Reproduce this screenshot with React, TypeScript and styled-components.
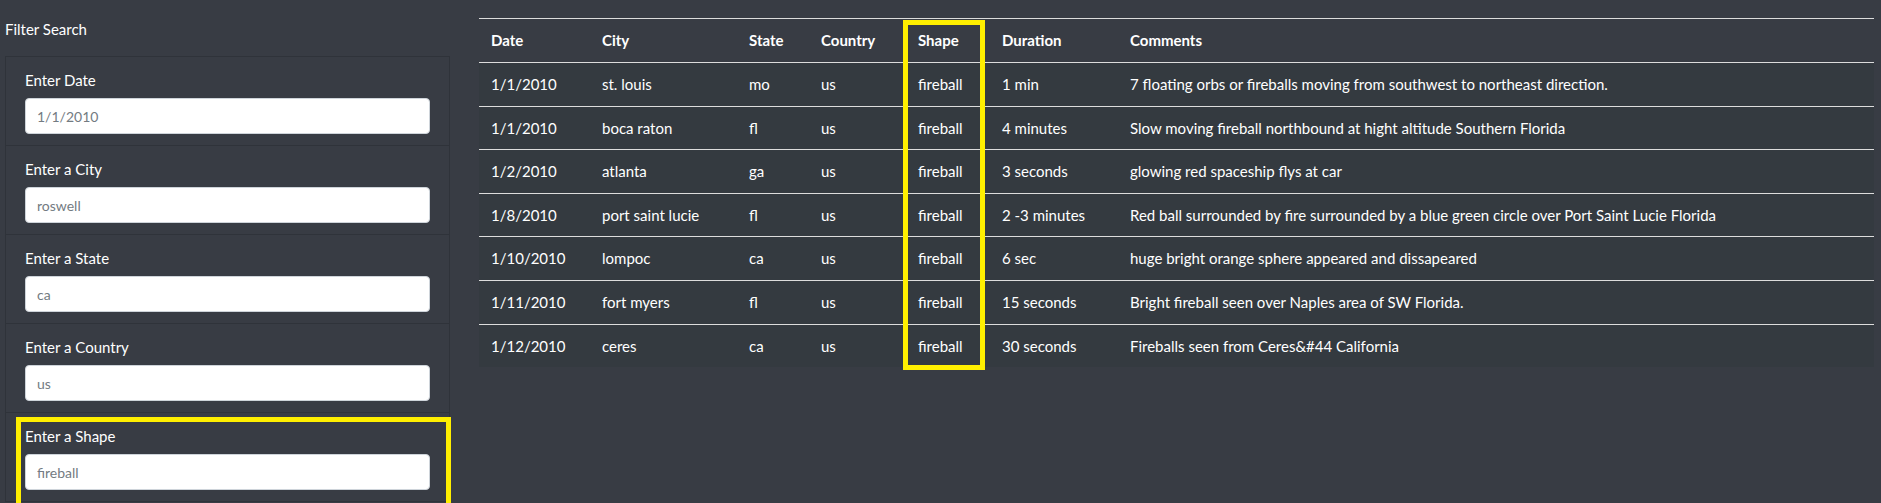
import React from "react";
import styled, { createGlobalStyle } from "styled-components";

const GlobalStyle = createGlobalStyle`
  html, body {
    margin: 0;
    padding: 0;
    background: #383c44;
    font-family: "Lato", "Noto Sans", sans-serif;
    color: #fff;
    overflow: hidden;
  }
`;

const Page = styled.div`
  display: flex;
  align-items: flex-start;
  padding: 0 7px 0 5px;
  height: 503px;
`;

const Sidebar = styled.aside`
  width: 445px;
  flex-shrink: 0;
`;

const SidebarTitle = styled.div`
  font-size: 15px;
  line-height: 20px;
  padding-top: 19px;
  margin-bottom: 17px;
`;

const FilterList = styled.ul`
  list-style: none;
  margin: 0;
  padding: 0;
`;

const FilterItem = styled.li`
  position: relative;
  border: 1px solid #2f333a;
  border-top-width: 0;
  padding: 13px 19px 11px 19px;

  &:first-child {
    border-top-width: 1px;
  }
`;

const Label = styled.label`
  display: block;
  font-size: 15px;
  line-height: 21px;
  margin-bottom: 7px;
`;

const Input = styled.input`
  display: block;
  box-sizing: border-box;
  width: 405px;
  height: 36px;
  padding: 0 11px;
  border: 1px solid #ced4da;
  border-radius: 4px;
  background: #fff;
  font-family: inherit;
  font-size: 14px;
  color: #6c757d;
  outline: none;

  &::placeholder {
    color: #737b82;
  }
`;

const Highlight = styled.div<{ $top: number; $left: number; $width: number; $height: number }>`
  position: absolute;
  top: ${(p) => p.$top}px;
  left: ${(p) => p.$left}px;
  width: ${(p) => p.$width}px;
  height: ${(p) => p.$height}px;
  box-sizing: border-box;
  border: 5px solid #ffef00;
  pointer-events: none;
`;

const Main = styled.main`
  position: relative;
  flex: 1;
  margin-left: 29px;
  padding-top: 18px;
`;

const Table = styled.table`
  width: 100%;
  border-collapse: collapse;
  table-layout: fixed;
  font-size: 15px;
`;

const HeadCell = styled.th`
  text-align: left;
  font-weight: 700;
  padding: 11px 12px;
  line-height: 21px;
  border-top: 1px solid #dcdcdc;
`;

const Row = styled.tr`
  background: #343a40;
`;

const Cell = styled.td`
  padding: 11px 12px;
  line-height: 20.6px;
  border-top: 1px solid #dcdcdc;
  white-space: nowrap;
`;

type Sighting = {
  date: string;
  city: string;
  state: string;
  country: string;
  shape: string;
  duration: string;
  comments: string;
};

const sightings: Sighting[] = [
  { date: "1/1/2010", city: "st. louis", state: "mo", country: "us", shape: "fireball", duration: "1 min", comments: "7 floating orbs or fireballs moving from southwest to northeast direction." },
  { date: "1/1/2010", city: "boca raton", state: "fl", country: "us", shape: "fireball", duration: "4 minutes", comments: "Slow moving fireball northbound at hight altitude Southern Florida" },
  { date: "1/2/2010", city: "atlanta", state: "ga", country: "us", shape: "fireball", duration: "3 seconds", comments: "glowing red spaceship flys at car" },
  { date: "1/8/2010", city: "port saint lucie", state: "fl", country: "us", shape: "fireball", duration: "2 -3 minutes", comments: "Red ball surrounded by fire surrounded by a blue green circle over Port Saint Lucie Florida" },
  { date: "1/10/2010", city: "lompoc", state: "ca", country: "us", shape: "fireball", duration: "6 sec", comments: "huge bright orange sphere appeared and dissapeared" },
  { date: "1/11/2010", city: "fort myers", state: "fl", country: "us", shape: "fireball", duration: "15 seconds", comments: "Bright fireball seen over Naples area of SW Florida." },
  { date: "1/12/2010", city: "ceres", state: "ca", country: "us", shape: "fireball", duration: "30 seconds", comments: "Fireballs seen from Ceres&#44 California" },
];

const filters = [
  { label: "Enter Date", placeholder: "1/1/2010" },
  { label: "Enter a City", placeholder: "roswell" },
  { label: "Enter a State", placeholder: "ca" },
  { label: "Enter a Country", placeholder: "us" },
  { label: "Enter a Shape", placeholder: "fireball", highlighted: true },
];

// col widths include the cell padding (fixed layout)
const columns = [
  { title: "Date", width: 111 },
  { title: "City", width: 147 },
  { title: "State", width: 72 },
  { title: "Country", width: 97 },
  { title: "Shape", width: 84 },
  { title: "Duration", width: 128 },
  { title: "Comments", width: undefined },
];

const App = () => {
  return (
    <>
      <GlobalStyle />
      <Page>
        <Sidebar>
          <SidebarTitle>Filter Search</SidebarTitle>
          <FilterList>
            {filters.map((f) => (
              <FilterItem key={f.label}>
                <Label>{f.label}</Label>
                <Input type="text" placeholder={f.placeholder} />
                {f.highlighted && <Highlight $top={4} $left={10} $width={435} $height={96} />}
              </FilterItem>
            ))}
          </FilterList>
        </Sidebar>

        <Main>
          <Table>
            <colgroup>
              {columns.map((c) => (
                <col key={c.title} style={c.width ? { width: c.width } : undefined} />
              ))}
            </colgroup>
            <thead>
              <tr>
                {columns.map((c) => (
                  <HeadCell key={c.title}>{c.title}</HeadCell>
                ))}
              </tr>
            </thead>
            <tbody>
              {sightings.map((s, i) => (
                <Row key={i}>
                  <Cell>{s.date}</Cell>
                  <Cell>{s.city}</Cell>
                  <Cell>{s.state}</Cell>
                  <Cell>{s.country}</Cell>
                  <Cell>{s.shape}</Cell>
                  <Cell>{s.duration}</Cell>
                  <Cell>{s.comments}</Cell>
                </Row>
              ))}
            </tbody>
          </Table>
          <Highlight $top={20} $left={424} $width={82} $height={350} />
        </Main>
      </Page>
    </>
  );
};

export default App;
